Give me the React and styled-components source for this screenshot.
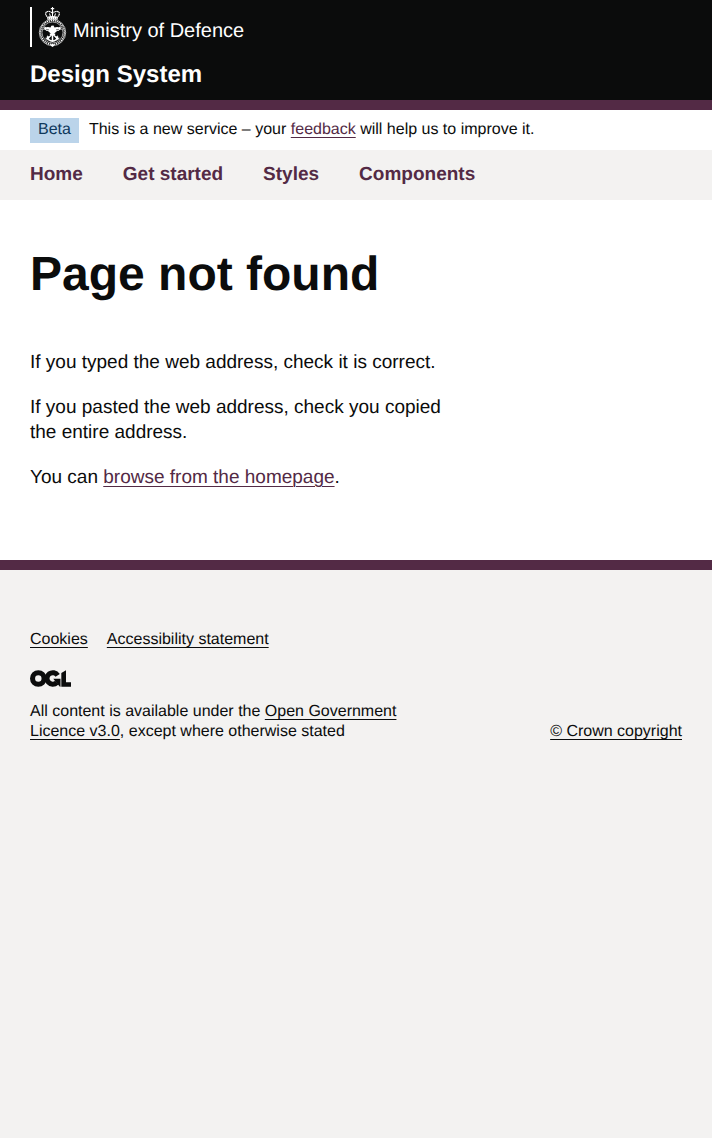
import React from "react";
import styled, { createGlobalStyle, ThemeProvider } from "styled-components";

const theme = {
  black: "#0b0c0c",
  white: "#ffffff",
  brand: "#532a45",
  grey: "#f3f2f1",
  tagBg: "#bbd4ea",
  tagText: "#0f385c",
};

const GlobalStyle = createGlobalStyle`
  *, *::before, *::after { box-sizing: border-box; }
  html { background: ${theme.grey}; }
  body {
    margin: 0;
    color: ${theme.black};
    font-family: "Liberation Sans", Arial, Helvetica, sans-serif;
    font-size: 16px;
    line-height: 20px;
    text-rendering: geometricPrecision;
  }
`;

const Container = styled.div`
  max-width: 1020px;
  margin: 0 auto;
  padding: 0 30px;
`;

const Link = styled.a`
  color: ${({ theme, $plain }) => ($plain ? theme.black : theme.brand)};
  text-decoration: underline;
  text-decoration-thickness: 1px;
  text-underline-offset: 3px;
`;

const Header = styled.header`
  padding: 7px 0 10px;
  background: ${({ theme }) => theme.black};
  border-bottom: 10px solid ${({ theme }) => theme.brand};
  color: ${({ theme }) => theme.white};
`;

const LogoLink = styled.a`
  display: flex;
  align-items: center;
  width: fit-content;
  height: 40px;
  gap: 6px;
  padding-left: 6px;
  border-left: 2px solid ${({ theme }) => theme.white};
  color: inherit;
  text-decoration: none;
`;

const LogoText = styled.span`
  padding-top: 8px;
  font-size: 20px;
  line-height: 24px;
`;

const ServiceLink = styled.a`
  display: block;
  width: fit-content;
  margin-top: 13px;
  color: inherit;
  font-size: 24px;
  font-weight: 700;
  line-height: 30px;
  text-decoration: none;
`;

const PhaseBanner = styled.div`
  background: ${({ theme }) => theme.white};
`;

const PhaseContent = styled.p`
  display: flex;
  align-items: flex-start;
  gap: 10px;
  margin: 0;
  padding: 8px 0 7px;
`;

const Tag = styled.strong`
  padding: 2px 8px 3px;
  background: ${({ theme }) => theme.tagBg};
  color: ${({ theme }) => theme.tagText};
  font-weight: 400;
`;

const PhaseText = styled.span`
  padding-top: 2px;
`;

const NavList = styled.ul`
  display: flex;
  flex-wrap: wrap;
  gap: 0 40px;
  margin: 0;
  padding: 0;
  list-style: none;
`;

const NavLink = styled.a`
  display: block;
  padding: 12px 0 13px;
  color: ${({ theme }) => theme.brand};
  font-size: 19px;
  font-weight: 700;
  line-height: 25px;
  text-decoration: none;
`;

const Main = styled.main`
  padding: 50px 0 70px;
  background: ${({ theme }) => theme.white};
  font-size: 19px;
  line-height: 25px;
`;

const Title = styled.h1`
  margin: 0 0 50px;
  font-size: 48px;
  font-weight: 700;
  line-height: 50px;
`;

const Column = styled.div`
  width: 66.66%;
`;

const Paragraph = styled.p`
  margin: 0;
  & + & { margin-top: 20px; }
`;

const Footer = styled.footer`
  padding: 60px 0 40px;
  border-top: 10px solid ${({ theme }) => theme.brand};
`;

const FooterLinks = styled.ul`
  display: flex;
  flex-wrap: wrap;
  gap: 0 19px;
  margin: 0 0 20px;
  padding: 0;
  list-style: none;
`;

const FooterMeta = styled.div`
  display: grid;
  grid-template-columns: 3fr 2fr;
  align-items: end;
`;

const OglMark = styled.svg`
  display: block;
  margin-bottom: 15px;
`;

const Copyright = styled.div`
  text-align: right;
`;

const navItems = ["Home", "Get started", "Styles", "Components"];
const footerItems = ["Cookies", "Accessibility statement"];

function Crest() {
  return (
    <svg width="29" height="40" viewBox="0 0 29 40" fill="none" stroke="#fff" aria-hidden="true">
      {/* crown */}
      <path d="M14.5 0v4M12.8 1.6h3.4" strokeWidth="1.1" />
      <path d="M9 9.5C6.2 6.6 8.2 4.2 10.6 4.4c1.8.1 3 .9 3.9 2.1.9-1.2 2.1-2 3.9-2.1 2.400-.2 4.400 2.100 1.600 5.100" strokeWidth="1.2" strokeDasharray="1.5 .4" />
      <path d="M14.5 4v5M11.5 6.5l1 3M17.5 6.5l-1 3" strokeWidth="1" />
      <path d="M9 9.8q5.500-1.500 11 0l-.5 2.900q-5-1-10 0z" fill="#fff" stroke="none" />
      <path d="M10 11.200h9" stroke="#0b0c0c" strokeWidth=".5" strokeDasharray="1 1" />
      {/* garter */}
      <circle cx="14.500" cy="25.500" r="13.200" strokeWidth=".7" />
      <circle cx="14.500" cy="25.500" r="11.900" strokeWidth="1.400" strokeDasharray="1.200 .8" />
      <circle cx="14.500" cy="25.500" r="10.500" strokeWidth=".6" />
      <path d="M12.800 37.300h3.400v1.500l-1.700 1.200-1.700-1.200z" fill="#fff" stroke="none" />
      {/* crossed swords */}
      <path d="M6.500 20l13.800 12.200M22.500 20L8.700 32.200" strokeWidth="1.300" />
      <path d="M7.500 30.800l2.700 2.700M21.500 30.800l-2.700 2.700" strokeWidth="1" />
      {/* eagle */}
      <path d="M4.800 22.500c2.200-2.500 5.200-3.300 7.700-1.900l.8-1.800 2.200-.2 1 2c2.500-1.400 5.500-.6 7.700 1.900-1.900-.2-2.600.2-3.500 1.400-1.900-.2-2.800.5-3.700 1.600l-2.500 1.300-2.500-1.300c-.9-1.100-1.800-1.800-3.700-1.600-.9-1.200-1.600-1.600-3.500-1.400z" fill="#fff" stroke="none" />
      <path d="M8 22.300l3 .5M21 22.300l-3 .5" stroke="#0b0c0c" strokeWidth=".5" />
      {/* anchor */}
      <path d="M14.500 24v10M11.800 27.200h5.400" strokeWidth="1.500" />
      <path d="M9.600 29.800c.5 2.700 2.300 4.200 4.900 4.300 2.600-.1 4.400-1.600 4.900-4.300" strokeWidth="1.600" />
      <path d="M8.700 31.500l.7-2.700 2.200 1.600M20.300 31.500l-.7-2.700-2.200 1.600" fill="#fff" strokeWidth=".5" />
    </svg>
  );
}

export default function App() {
  return (
    <ThemeProvider theme={theme}>
      <GlobalStyle />
      <Header>
        <Container>
          <LogoLink href="#">
            <Crest />
            <LogoText>Ministry of Defence</LogoText>
          </LogoLink>
          <ServiceLink href="#">Design System</ServiceLink>
        </Container>
      </Header>
      <PhaseBanner>
        <Container>
          <PhaseContent>
            <Tag>Beta</Tag>
            <PhaseText>
              This is a new service – your <Link href="#">feedback</Link> will help us to improve it.
            </PhaseText>
          </PhaseContent>
        </Container>
      </PhaseBanner>
      <nav aria-label="Main">
        <Container>
          <NavList>
            {navItems.map((item) => (
              <li key={item}>
                <NavLink href="#">{item}</NavLink>
              </li>
            ))}
          </NavList>
        </Container>
      </nav>
      <Main>
        <Container>
          <Title>Page not found</Title>
          <Column>
            <Paragraph>If you typed the web address, check it is correct.</Paragraph>
            <Paragraph>If you pasted the web address, check you copied the entire address.</Paragraph>
            <Paragraph>
              You can <Link href="#">browse from the homepage</Link>.
            </Paragraph>
          </Column>
        </Container>
      </Main>
      <Footer>
        <Container>
          <FooterLinks>
            {footerItems.map((item) => (
              <li key={item}>
                <Link $plain href="#">{item}</Link>
              </li>
            ))}
          </FooterLinks>
          <FooterMeta>
            <div>
              <OglMark width="41" height="17" viewBox="0 0 483 196" fill="none" stroke={theme.black} strokeWidth="60" aria-hidden="true">
                <circle cx="98" cy="98" r="68" />
                <path d="M326 62A68 68 0 1 0 316 146" />
                <path d="M275 100h84v94h-7l-53-61z" fill={theme.black} stroke="none" />
                <path d="M424 141V0l-55 34v160h114v-53z" fill={theme.black} stroke="none" />
              </OglMark>
              <div>
                All content is available under the <Link $plain href="#">Open Government Licence v3.0</Link>, except
                where otherwise stated
              </div>
            </div>
            <Copyright>
              <Link $plain href="#">© Crown copyright</Link>
            </Copyright>
          </FooterMeta>
        </Container>
      </Footer>
    </ThemeProvider>
  );
}
